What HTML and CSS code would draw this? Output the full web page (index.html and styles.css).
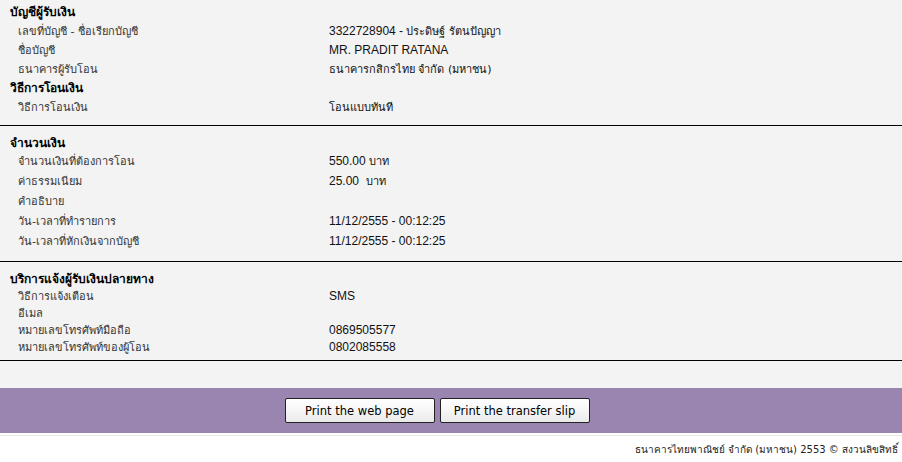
FILE: index.html
```html
<!DOCTYPE html>
<html lang="th">
<head>
<meta charset="utf-8">
<title>Transfer</title>
<link rel="stylesheet" href="styles.css">
</head>
<body>
<div class="panel">
  <section class="group g1">
    <div class="row head"><span>บัญชีผู้รับเงิน</span></div>
    <div class="row"><span class="lbl">เลขที่บัญชี - ชื่อเรียกบัญชี</span><span class="val">3322728904 - <span class="th">ประดิษฐ์ รัตนปัญญา</span></span></div>
    <div class="row"><span class="lbl">ชื่อบัญชี</span><span class="val">MR. PRADIT RATANA</span></div>
    <div class="row"><span class="lbl">ธนาคารผู้รับโอน</span><span class="val th">ธนาคารกสิกรไทย จำกัด (มหาชน)</span></div>
    <div class="row head"><span>วิธีการโอนเงิน</span></div>
    <div class="row"><span class="lbl">วิธีการโอนเงิน</span><span class="val th">โอนแบบทันที</span></div>
  </section>
  <section class="group g2">
    <div class="row head"><span>จำนวนเงิน</span></div>
    <div class="row"><span class="lbl">จำนวนเงินที่ต้องการโอน</span><span class="val">550.00 <span class="th">บาท</span></span></div>
    <div class="row"><span class="lbl">ค่าธรรมเนียม</span><span class="val">25.00 &nbsp;<span class="th">บาท</span></span></div>
    <div class="row"><span class="lbl">คำอธิบาย</span><span class="val"></span></div>
    <div class="row"><span class="lbl">วัน-เวลาที่ทำรายการ</span><span class="val">11/12/2555 - 00:12:25</span></div>
    <div class="row"><span class="lbl">วัน-เวลาที่หักเงินจากบัญชี</span><span class="val">11/12/2555 - 00:12:25</span></div>
  </section>
  <section class="group g3">
    <div class="row head"><span>บริการแจ้งผู้รับเงินปลายทาง</span></div>
    <div class="row"><span class="lbl">วิธีการแจ้งเตือน</span><span class="val">SMS</span></div>
    <div class="row"><span class="lbl">อีเมล</span><span class="val"></span></div>
    <div class="row"><span class="lbl">หมายเลขโทรศัพท์มือถือ</span><span class="val">0869505577</span></div>
    <div class="row"><span class="lbl">หมายเลขโทรศัพท์ของผู้โอน</span><span class="val">0802085558</span></div>
  </section>
  <div class="spacer"></div>
</div>
<div class="actions">
  <button class="btn" type="button">Print the web page</button>
  <button class="btn" type="button">Print the transfer slip</button>
</div>
<div class="rule"></div>
<footer class="footer">ธนาคารไทยพาณิชย์ จำกัด (มหาชน) 2553 © สงวนลิขสิทธิ์</footer>
</body>
</html>
```

FILE: styles.css
```css
html, body {
  margin: 0;
  padding: 0;
  background: #ffffff;
}
body {
  width: 902px;
  font-family: Tahoma, "DejaVu Sans", "Noto Sans", sans-serif;
  color: #222;
}
.panel {
  background: #f3f3f3;
}
.group {
  border-bottom: 1px solid #000;
}
.row {
  display: grid;
  grid-template-columns: 329px 1fr;
  align-items: center;
  font-size: 11px;
}
.row.head {
  display: flex;
  padding-left: 10px;
  font-weight: bold;
  font-size: 12px;
  color: #000;
}
.lbl {
  padding-left: 18px;
  color: #333;
}
.val {
  font-family: "Liberation Sans", Arial, sans-serif;
  font-size: 12px;
  color: #111;
}
.th {
  font-family: Tahoma, "DejaVu Sans", "Noto Sans", sans-serif;
  font-size: 11px;
}
.g1 { padding: 2px 0 9px; }
.g1 .row { height: 19px; }
.g2 { padding: 7px 0 10px; }
.g2 .row { height: 20px; }
.g2 .row.head { height: 18px; }
.g3 { padding: 8px 0 5px; }
.g3 .row { height: 17px; }
.spacer { height: 27px; }
.actions {
  background: #9a85b0;
  height: 45px;
  display: flex;
  justify-content: center;
  align-items: flex-start;
  gap: 5px;
  padding: 10px 28px 0 0;
  box-sizing: border-box;
}
.btn {
  width: 150px;
  height: 25px;
  margin: 0;
  padding: 0;
  border: 1px solid #222;
  border-radius: 2px;
  background: linear-gradient(#ffffff 0%, #f6f6f6 50%, #e9e9e9 100%);
  font-family: Tahoma, "DejaVu Sans", sans-serif;
  font-size: 11.5px;
  color: #000;
}
.rule {
  height: 1px;
  margin-top: 2px;
  background: #e6e6e6;
}
.footer {
  text-align: right;
  padding: 6px 4px 0 0;
  font-size: 10px;
  color: #222;
}
```
